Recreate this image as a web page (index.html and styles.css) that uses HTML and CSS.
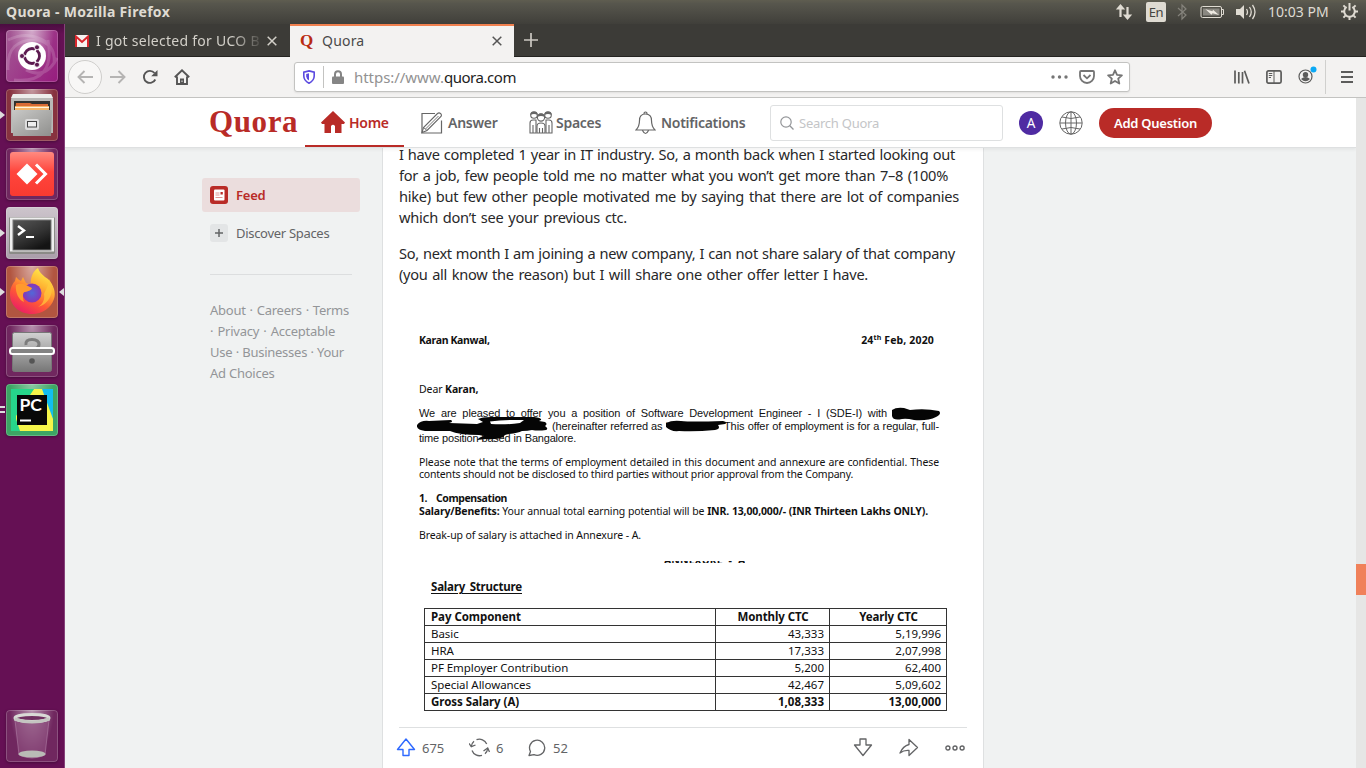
FILE: index.html
```html
<!DOCTYPE html>
<html lang="en">
<head>
<meta charset="utf-8">
<title>Quora</title>
<link rel="stylesheet" href="styles.css">
</head>
<body>
<header class="panel">
  <span class="panel-title">Quora - Mozilla Firefox</span>
  <div class="indicators">
    <svg width="18" height="18" viewBox="0 0 18 18" class="ind-net"><path d="M5.500 14V4M12.500 4v11" stroke="#dfdbd2" stroke-width="2.200" fill="none"/><path d="M.8 6.500L5.500 1l4.700 5.500zM7.800 11.500l4.700 5.500 4.700-5.500z" fill="#dfdbd2"/></svg>
    <span class="lang">En</span>
    <svg width="10" height="18" viewBox="0 0 10 18" class="ind-bt"><path d="M1 5l8 7-4 4V2l4 4-8 7" stroke="#85837c" stroke-width="1.200" fill="none"/></svg>
    <svg width="25" height="14" viewBox="0 0 25 14" class="ind-bat"><rect x="1" y="1.500" width="20.500" height="11" rx="1.500" fill="none" stroke="#dfdbd2"/><rect x="3" y="3.500" width="16.500" height="7" fill="#8a8881"/><path d="M22 4.500h1.500v5H22" fill="none" stroke="#dfdbd2"/><path d="M5.500 4.300l7 2 .5-1.500L19 10l-6.500-1.800-1 1.500z" fill="#eeeae2"/></svg>
    <svg width="20" height="18" viewBox="0 0 20 18" class="ind-vol"><path d="M0 6h4l4-4v14l-4-4H0z" fill="#dfdbd2"/><path d="M10.500 6q2 3 0 6M13.500 4q3.500 5 0 10M16.500 2q5 7 0 14" stroke="#dfdbd2" stroke-width="1.300" fill="none"/></svg>
    <span class="clock">10:03 PM</span>
    <svg width="17" height="17" viewBox="0 0 17 17" class="ind-gear"><path d="M5.700 4a5.300 5.300 0 1 0 5.600 0M8.500 0v7.500" stroke="#dfdbd2" stroke-width="2" fill="none"/><path d="M2.400 2.400l2 2M14.600 2.400l-2 2M0 8.500h3M14 8.500h3M2.400 14.600l2-2M14.600 14.600l-2-2M8.500 14v3" stroke="#dfdbd2" stroke-width="2"/></svg>
  </div>
</header>
<div class="desktop">
<aside class="launcher">
  <div class="tile tile-dash">
    <svg width="52" height="52" viewBox="0 0 52 52"><g fill="none" stroke="#fff" stroke-opacity=".16" stroke-width="3"><path d="M2 40Q0 8 32 10Q50 14 48 34M8 50Q50 54 42 10M2 10Q22 0 40 12M20 40Q40 50 51 28"/></g><circle cx="26" cy="26" r="14" fill="#fff"/><circle cx="26" cy="26" r="7.500" fill="none" stroke="#5c1a50" stroke-width="2.800"/><path d="M26 26H14M26 26l6.500-11M26 26l6.500 11" stroke="#fff" stroke-width="1.500"/><g fill="#5c1a50" stroke="#fff" stroke-width=".8"><circle cx="16" cy="26" r="2.500"/><circle cx="31" cy="17.300" r="2.500"/><circle cx="31" cy="34.700" r="2.500"/></g></svg>
  </div>
  <div class="tile tile-files"><i class="run"></i>
    <svg width="52" height="52" viewBox="0 0 52 52"><defs><linearGradient id="cab" x2="1" y2="1"><stop stop-color="#c9c9c7"/><stop offset="1" stop-color="#8f8f8d"/></linearGradient></defs><path d="M7 5h38l2 5v34H5V10z" fill="#b9b9b7"/><path d="M7 5h38l2 4H5z" fill="#ededeb"/><path d="M8 12h36v10H8z" fill="#30302e"/><path d="M10 14h14l2 1h16v8H9z" fill="#d96b35"/><path d="M9 17h34v5H9z" fill="#f5b66a"/><path d="M9 18.500h34" stroke="#fff3df"/><path d="M6 21h40l-1 26H7z" fill="url(#cab)"/><rect x="19" y="30" width="14" height="11" rx="2" fill="#ddd"/><rect x="21.500" y="32.500" width="9" height="5.500" fill="#eee" stroke="#444"/></svg>
  </div>
  <div class="tile">
    <svg width="52" height="52" viewBox="0 0 52 52"><defs><linearGradient id="red" x2="0" y2="1"><stop stop-color="#ff8a80"/><stop offset=".45" stop-color="#ff453c"/><stop offset="1" stop-color="#f93a31"/></linearGradient></defs><rect x="4" y="4" width="44" height="44" rx="3" fill="url(#red)"/><path d="M21 15.500L31.500 26 21 36.500 10.500 26z" fill="#fff"/><path d="M30 16.500L39.500 26 30 35.500" fill="none" stroke="#fff" stroke-width="3"/></svg>
  </div>
  <div class="tile tile-term"><i class="run"></i>
    <svg width="52" height="52" viewBox="0 0 52 52"><defs><linearGradient id="scr" x2=".6" y2="1"><stop stop-color="#555"/><stop offset=".6" stop-color="#333"/><stop offset="1" stop-color="#141414"/></linearGradient></defs><rect x="3" y="10" width="46" height="37" rx="1.500" fill="#8b8b87"/><rect x="4" y="10.500" width="44" height="34" fill="#eee"/><rect x="6.500" y="12.500" width="39" height="31" fill="#777"/><rect x="7.500" y="13.500" width="37" height="29" fill="url(#scr)"/><path d="M12 19l6 4.500-6 4.500" fill="none" stroke="#fff" stroke-width="2.400"/><path d="M20 30h8" stroke="#fff" stroke-width="2"/></svg>
  </div>
  <div class="tile tile-fox"><i class="run"></i><i class="focus"></i>
    <svg width="52" height="52" viewBox="0 0 52 52"><defs><linearGradient id="fx" x1=".8" x2=".25" y2="1"><stop stop-color="#fff44f"/><stop offset=".35" stop-color="#ffb232"/><stop offset=".65" stop-color="#ff5a35"/><stop offset="1" stop-color="#ea1a68"/></linearGradient><radialGradient id="gl"><stop stop-color="#5268d8"/><stop offset="1" stop-color="#8734b8"/></radialGradient></defs><path d="M32 2c1 4 4 6 7 9l3 2c6 6 8 14 6 20-3 9-12 15-22 15C13 48 4 39 4 28c0-6 3-11 5-13l1-4c2 2 3 3 5 4l2-4 3 6c3 1 4 2 5 2-1-7 2-14 7-17z" fill="url(#fx)"/><circle cx="26" cy="27" r="9.500" fill="url(#gl)"/><path d="M10 19c5-3 10 0 16 3-1 3-4 3-7 4-3 0-2 7-1 10-5-2-9-9-8-17z" fill="#ff9a2e"/><path d="M43 13c7 13 0 25-11 28 5-3 7-8 6-13 2-5 5-9 5-15z" fill="#ffcb3c" opacity=".7"/></svg>
  </div>
  <div class="tile">
    <svg width="52" height="52" viewBox="0 0 52 52"><defs><linearGradient id="gry" x2="0" y2="1"><stop stop-color="#d2d2d2"/><stop offset="1" stop-color="#777"/></linearGradient></defs><rect x="6.500" y="7.500" width="39" height="39" rx="2" fill="url(#gry)" stroke="#777"/><path d="M20 20q-1-5.500 6-5.500t7 5q0 3-4 4.500" fill="none" stroke="#7c7c7c" stroke-width="3"/><circle cx="26" cy="36" r="2.800" fill="#555"/><rect x="4" y="23" width="44" height="6" rx="2.500" fill="#838383" stroke="#fff" stroke-width="2"/></svg>
  </div>
  <div class="tile tile-py"><i class="dots"></i>
    <svg width="52" height="52" viewBox="0 0 52 52"><path d="M5 5h42v42H5z" fill="#26d58a"/><path d="M35 5h12v30z" fill="#12bdf0"/><path d="M28 5h8l11 30v12H14L5 20z" fill="#f5f54a"/><path d="M5 5h23L10 32v15H5z" fill="#26d58a"/><path d="M11 11h30v30H11z" fill="#080808"/><path d="M14 36.500h11" stroke="#fff" stroke-width="2"/><text x="13.500" y="26.500" class="pc" textLength="22.500" lengthAdjust="spacingAndGlyphs">PC</text></svg>
  </div>
  <div class="tile tile-trash">
    <svg width="52" height="52" viewBox="0 0 52 52"><path d="M9 10l4 35q13 6 26 0l4-35" fill="#925584" fill-opacity=".6" stroke="#b98bb0" stroke-opacity=".5"/><ellipse cx="26" cy="44" rx="13.500" ry="3.500" fill="#b9bbb6"/><ellipse cx="26" cy="8" rx="17" ry="3.500" fill="#703060" stroke="#d9dad6" stroke-width="3"/><path d="M8.500 9q17.500 6 35 0" fill="none" stroke="#c4c5c1" stroke-width="3"/></svg>
  </div>
</aside>
<main class="browser">
  <div class="tabs">
    <div class="tab tab-mail">
      <svg width="14" height="12" viewBox="0 0 14 12"><path d="M0 0h14v12H0z" fill="#f5f2f0"/><path d="M1 12V1.500L7 7l6-5.500V12" fill="none" stroke="#d8262c" stroke-width="2"/></svg>
      <span class="tab-text mail-text">I got selected for UCO B</span>
      <svg width="10" height="10" viewBox="0 0 10 10" class="tab-x"><path d="M.7.7l8.600 8.600M9.300.7L.7 9.300" stroke="#d3d0c9" stroke-width="1.500"/></svg>
    </div>
    <div class="tab tab-active">
      <span class="favicon">Q</span>
      <span class="tab-text">Quora</span>
      <svg width="10" height="10" viewBox="0 0 10 10" class="tab-x"><path d="M.7.7l8.600 8.600M9.300.7L.7 9.300" stroke="#555" stroke-width="1.500"/></svg>
    </div>
    <svg width="14" height="14" viewBox="0 0 14 14" class="newtab"><path d="M7 0v14M0 7h14" stroke="#ccc9c2" stroke-width="1.700"/></svg>
  </div>
  <div class="toolbar">
    <span class="back"><svg width="16" height="14" viewBox="0 0 16 14"><path d="M16 7H1.500M7.500 1l-6 6 6 6" fill="none" stroke="#b5b4b3" stroke-width="1.900"/></svg></span>
    <svg width="16" height="14" viewBox="0 0 16 14" class="fwd"><path d="M0 7h14.500M8.500 1l6 6-6 6" fill="none" stroke="#b5b4b3" stroke-width="1.900"/></svg>
    <svg width="16" height="16" viewBox="0 0 16 16" class="reload"><path d="M13.300 10.500A6 6 0 1 1 12.500 4" fill="none" stroke="#555" stroke-width="1.900"/><path d="M15.500 1v6.300H9.200z" fill="#555"/></svg>
    <svg width="16" height="16" viewBox="0 0 16 16" class="home"><path d="M.8 8.300L8 1.300l7.200 7M3 7.500v7.500h10V7.500" fill="none" stroke="#555" stroke-width="1.900"/><path d="M6 15V9.500h4V15z" fill="#555"/><path d="M8 11.500v1.500" stroke="#eee"/></svg>
    <div class="urlbar">
      <svg width="12" height="14" viewBox="0 0 12 14"><path d="M6 .9l5.200 1.300V6q0 4.500-5.200 7.200Q.8 10.500.8 6V2.200z" fill="none" stroke="#5c4be0" stroke-width="1.600"/><path d="M6 3.200L3.200 4v2.500Q3.400 9 6 10.500z" fill="#5c4be0"/></svg>
      <i class="url-sep"></i>
      <svg width="12" height="14" viewBox="0 0 12 14" class="lock"><path d="M3 7V4.200a3 3 0 0 1 6 0V7" fill="none" stroke="#858585" stroke-width="2"/><rect y="6.500" width="12" height="7.500" rx="1" fill="#858585"/></svg>
      <span class="url"><span class="dim">https://www.</span>quora.com</span>
      <svg width="17" height="4" viewBox="0 0 17 4" class="dots3"><g fill="#757575"><circle cx="2" cy="2" r="1.700"/><circle cx="8.500" cy="2" r="1.700"/><circle cx="15" cy="2" r="1.700"/></g></svg>
      <svg width="16" height="14" viewBox="0 0 16 14" class="pocket"><path d="M2 1h12q1 0 1 1v4a7 7 0 0 1-14 0V2q0-1 1-1z" fill="none" stroke="#757575" stroke-width="1.800"/><path d="M4.500 5L8 8.300 11.500 5" fill="none" stroke="#757575" stroke-width="1.800"/></svg>
      <svg width="16" height="16" viewBox="0 0 16 16"><path d="M8 1.300l2 4.500 4.900.5-3.700 3.300 1.100 4.900L8 12l-4.300 2.500 1.100-4.900L1.100 6.300 6 5.800z" fill="none" stroke="#757575" stroke-width="1.800" stroke-linejoin="round"/></svg>
    </div>
    <svg width="16" height="14" viewBox="0 0 16 14" class="lib"><path d="M1 .5v13M4.800 2v11.500M8.500 2v11.500M10.500.8L15 13.500" fill="none" stroke="#5c5c5b" stroke-width="1.700"/></svg>
    <svg width="16" height="14" viewBox="0 0 16 14" class="side"><rect x=".9" y=".9" width="14.200" height="12.200" rx="1.500" fill="none" stroke="#5c5c5b" stroke-width="1.700"/><path d="M8 1v12M2.800 3.500h3.500M2.800 5.500h3.500M2.800 7.500H5" stroke="#5c5c5b" stroke-width="1"/></svg>
    <svg width="19" height="18" viewBox="0 0 19 18" class="acct"><circle cx="7.500" cy="10.500" r="6.500" fill="#f3f2f1" stroke="#5c5c5b" stroke-width="1.200"/><circle cx="7.500" cy="8.700" r="2.700" fill="#5c5c5b"/><path d="M3 13q4.500-4 9 0-4.500 4.500-9 0z" fill="#5c5c5b"/><circle cx="15.500" cy="3.500" r="3" fill="#0ba9f5"/></svg>
    <i class="tool-sep"></i>
    <svg width="12" height="12" viewBox="0 0 12 12"><path d="M0 1h12M0 6h12M0 11h12" stroke="#5c5c5b" stroke-width="1.800"/></svg>
  </div>
  <div class="viewport">
  <div class="page">
    <nav class="site-nav">
      <span class="logo">Quora</span>
      <a class="nav-item nav-home"><svg width="24" height="22" viewBox="0 0 24 22"><path d="M12 0l12 11.500-1 1.500h-2.500v9H14v-7q-2-2.500-4 0v7H3.500v-9H1l-1-1.500z" fill="#b92b27"/></svg><span>Home</span></a>
      <a class="nav-item nav-answer"><svg width="22" height="22" viewBox="0 0 22 22"><path d="M14 1.500H1v19.500h19.500V8.500" fill="none" stroke="#666" stroke-width="1.200"/><path d="M1 20.500l1.500-5L16.500 1.500q1.500-1.200 3 0t.5 3L6 18.500z" fill="#fff" stroke="#666" stroke-width="1.100"/><path d="M4.500 17L17.500 4M2.500 15.500L6 18.500" stroke="#666" stroke-width=".9"/></svg><span>Answer</span></a>
      <a class="nav-item nav-spaces"><svg width="24" height="23" viewBox="0 0 24 23"><g fill="#fff" stroke="#666" stroke-width="1.100"><circle cx="5" cy="4" r="3.300"/><circle cx="19" cy="4" r="3.300"/><path d="M1 22V12q0-3 3-3h3v13zM23 22V12q0-3-3-3h-3v13zM4 22v-8M20 22v-8"/><path d="M8 22v-7q0-3 4-3t4 3v7zM10.500 22v-5M13.500 22v-5"/><circle cx="12" cy="6.500" r="3.600"/></g><path d="M1.500 4Q1 1 5 .7 9 1 8.500 4 5 2 1.500 4zM15.500 4Q15 1 19 .7q4 .3 3.500 3.300Q19 2 15.500 4zM8.200 6q0-3.500 3.800-3.500T15.800 6Q12 4 8.200 6z" fill="#666"/></svg><span>Spaces</span></a>
      <a class="nav-item nav-notif"><svg width="21" height="24" viewBox="0 0 21 24"><path d="M10.500 3C6 3 4.500 6 4.500 9.500c0 5-1 7-3.500 9.500h19c-2.500-2.500-3.500-4.500-3.500-9.500 0-3.500-1.500-6.500-6-6.500zM9 3V2q1.500-2 3 0v1M7.500 19.500q3 6 6 0" fill="none" stroke="#666" stroke-width="1.200"/></svg><span>Notifications</span></a>
      <div class="search"><svg width="14" height="14" viewBox="0 0 14 14"><circle cx="6" cy="6" r="5.200" fill="none" stroke="#939598" stroke-width="1.200"/><path d="M9.800 9.800L13.500 13.500" stroke="#939598" stroke-width="1.300"/></svg><span>Search Quora</span></div>
      <span class="avatar">A</span>
      <svg width="24" height="24" viewBox="0 0 24 24" class="globe"><g fill="none" stroke="#666"><circle cx="12" cy="12" r="11.200"/><ellipse cx="12" cy="12" rx="5.500" ry="11.200"/><path d="M12 1v22M1 12h22M3 6q9 3 18 0M3 18q9-3 18 0"/></g></svg>
      <a class="ask">Add Question</a>
    </nav>
    <div class="columns">
      <aside class="sidebar">
        <a class="feed"><svg width="18" height="18" viewBox="0 0 18 18"><rect width="18" height="18" rx="3" fill="#b92b27"/><rect x="4" y="3.500" width="10.500" height="11" rx="1" fill="#fff"/><path d="M5.500 7h4M5.500 9h4M5.500 11.500h7" stroke="#dc8a88" stroke-width=".9"/><rect x="10.500" y="6" width="2.300" height="2.500" fill="#b92b27"/></svg><span>Feed</span></a>
        <a class="discover"><svg width="18" height="18" viewBox="0 0 18 18"><rect width="18" height="18" rx="3" fill="#e3e5e6"/><path d="M9 5v8M5 9h8" stroke="#636466" stroke-width="1.500"/></svg><span>Discover Spaces</span></a>
        <div class="links">
          <p class="k1">About · Careers · Terms</p><p class="k2">· Privacy · Acceptable</p><p class="k3">Use · Businesses · Your</p><p class="k4">Ad Choices</p>
        </div>
      </aside>
      <article class="post">
        <div class="para">
          <p class="p1">I have completed 1 year in IT industry. So, a month back when I started looking out</p>
          <p class="p2">for a job, few people told me no matter what you won’t get more than 7–8 (100%</p>
          <p class="p3">hike) but few other people motivated me by saying that there are lot of companies</p>
          <p class="p4">which don’t see your previous ctc.</p>
        </div>
        <div class="para">
          <p class="p5">So, next month I am joining a new company, I can not share salary of that company</p>
          <p class="p6">(you all know the reason) but I will share one other offer letter I have.</p>
        </div>
        <figure class="letter">
          <div class="letter-head"><b class="l-name">Karan Kanwal,</b><b class="l-date">24<sup>th</sup> Feb, 2020</b></div>
          <p class="l-dear">Dear <b>Karan,</b></p>
          <div class="offer">
            <p class="o1">We are pleased to offer you a position of Software Development Engineer - I (SDE-I) with</p>
            <div class="o2"><p class="o2a">(hereinafter referred as ‘</p><p class="o2b">This offer of employment is for a regular, full-</p></div>
            <p class="o3">time position based in Bangalore.</p>
            <svg class="ink" width="524" height="36" viewBox="0 0 524 36"><path d="M475 3q4-3 12-2l6 2q15-2 29 1 3 3-3 6-8 4-22 3-8-2-12-1-9 2-10-3zM0 18q4-5 12-4l22-1q3 2-2 3l28 1 6-2-5-3q4-2 13-2l43 0q8 1 7 3l-2 1 6 1q3 2 0 4 4 3 1 4-8 1-14 0-4 1-10 1-4 2-13 3-6 1-5 3-8 3-18 2l-9 1q2-3 7-4l-5-1q-20 0-29-4L8 24Q-1 23 0 18zM249 16q6-3 15-2 10 1 42 0 5 1 2 3l-7 1q3 4-3 5-20 2-36 1-8 1-13-4z" fill="#050505"/><path d="M73 14.500q15-2 34-1.500l-4 3q-15 2-29 1z" fill="#fff"/></svg>
          </div>
          <p class="l-note1">Please note that the terms of employment detailed in this document and annexure are confidential. These</p>
          <p class="l-note2">contents should not be disclosed to third parties without prior approval from the Company.</p>
          <p class="l-comp"><b>1.&nbsp;&nbsp; Compensation</b></p>
          <p class="l-sal"><b>Salary/Benefits:</b> Your annual total earning potential will be <b>INR. 13,00,000/- (INR Thirteen Lakhs ONLY).</b></p>
          <p class="l-break">Break-up of salary is attached in Annexure - A.</p>
          <div class="annex"><b>ANNEXURE - A</b></div>
          <p class="l-struct"><b>Salary Structure</b></p>
          <table class="pay">
            <tr><th class="c1">Pay Component</th><th class="c2">Monthly CTC</th><th class="c3">Yearly CTC</th></tr>
            <tr><td>Basic</td><td>43,333</td><td>5,19,996</td></tr>
            <tr><td>HRA</td><td>17,333</td><td>2,07,998</td></tr>
            <tr><td>PF Employer Contribution</td><td>5,200</td><td>62,400</td></tr>
            <tr><td>Special Allowances</td><td>42,467</td><td>5,09,602</td></tr>
            <tr class="gross"><td>Gross Salary (A)</td><td>1,08,333</td><td>13,00,000</td></tr>
          </table>
        </figure>
        <footer class="actions">
          <svg width="20" height="19" viewBox="0 0 20 19" class="up"><path d="M10 1l8.500 10.500H13V17.500H7V11.500H1.500z" fill="none" stroke="#2e69ff" stroke-width="1.400" stroke-linejoin="round"/></svg><span class="n1">675</span>
          <svg width="21" height="19" viewBox="0 0 21 19"><path d="M2.300 8.500A8 8 0 0 1 5 3.300M7.500 1.700A8 8 0 0 1 17.700 6M18.700 10.500A8 8 0 0 1 16 15.700M13 17.300A8 8 0 0 1 3 12.500" fill="none" stroke="#636466" stroke-width="1.300"/><path d="M0 5.500l2.300 3.200 4.200-1.700M14.500 13l4.200-3 1.800 4" fill="none" stroke="#636466" stroke-width="1.300"/></svg><span class="n2">6</span>
          <svg width="18" height="18" viewBox="0 0 18 18"><path d="M1 16.500l1.500-4A7.600 7.600 0 1 1 6 15.700z" fill="none" stroke="#636466" stroke-width="1.300" stroke-linejoin="round"/></svg><span class="n3">52</span>
          <svg width="20" height="19" viewBox="0 0 20 19" class="down"><path d="M10 17.500l8.500-10.500H13V1H7v6H1.500z" fill="none" stroke="#636466" stroke-width="1.300" stroke-linejoin="round"/></svg>
          <svg width="20" height="19" viewBox="0 0 20 19" class="share"><path d="M10 1.500l8.500 8-8.500 8V12.500q-5-.5-9 2.500 3-7 9-8.500z" fill="none" stroke="#636466" stroke-width="1.300" stroke-linejoin="round"/></svg>
          <svg width="20" height="6" viewBox="0 0 20 6" class="more"><g fill="none" stroke="#636466" stroke-width="1.400"><circle cx="2.900" cy="3" r="2"/><circle cx="10" cy="3" r="2"/><circle cx="17.100" cy="3" r="2"/></g></svg>
        </footer>
      </article>
    </div>
  </div>
  <div class="scrollbar"><i class="thumb"></i></div>
  </div>
</main>
</div>
</body>
</html>
```
FILE: styles.css
```css
* { box-sizing: border-box; }
body { margin: 0; width: 1366px; height: 768px; overflow: hidden; font-family: "Noto Sans", "Open Sans", sans-serif; display: flex; flex-direction: column; background: #f0f2f2; }
p { margin: 0; white-space: nowrap; }
svg { display: block; flex: none; }
i { display: block; flex: none; }
.panel { height: 24px; flex: none; display: flex; justify-content: space-between; align-items: center; padding: 0 8px 1px 6px; background: linear-gradient(#5f5d50, #57564d 15%, #403f3a); color: #dfdbd2; }
.panel-title { font-weight: 700; font-size: 14px; letter-spacing: .33px; }
.indicators { display: flex; align-items: center; }
.lang { margin-left: 13px; width: 20px; height: 20px; line-height: 20px; border-radius: 2px; background: #dfdbd2; color: #45443f; font-size: 13px; text-align: center; letter-spacing: -.5px; }
.ind-bt { margin-left: 11px; } .ind-bat { margin-left: 13px; } .ind-vol { margin-left: 11px; }
.clock { margin-left: 12px; width: 61px; font-size: 14px; letter-spacing: 0; white-space: nowrap; }
.ind-gear { margin-left: 12px; }
.desktop { flex: 1; display: flex; min-height: 0; }
.launcher { width: 65px; flex: none; display: flex; flex-direction: column; gap: 7px; padding: 6px 0 6px 6px; background: linear-gradient(#4a0d40, #651054 10px); border-right: 1px solid #86427a; }
.tile { position: relative; width: 52px; height: 52px; flex: none; border-radius: 4px; background: radial-gradient(ellipse at 50% 0, rgba(255,255,255,.5), transparent 60%), #70275f; box-shadow: inset 0 0 0 1px rgba(255,255,255,.2), 0 1px 3px rgba(0,0,0,.3); }
.tile-dash { background: radial-gradient(ellipse at 50% 0, rgba(255,255,255,.55), transparent 60%), linear-gradient(120deg, #a45a95, #971b7e); }
.tile-files { background: radial-gradient(ellipse at 50% 0, rgba(255,255,255,.5), transparent 60%), #87323f; }
.tile-term { background: linear-gradient(#cdc5cc, #aa9eaa); }
.tile-fox { background: radial-gradient(ellipse at 50% 0, rgba(255,255,255,.5), transparent 60%), #b25540; }
.tile-py { background: radial-gradient(ellipse at 50% 0, rgba(255,255,255,.4), transparent 60%), #3da564; }
.tile-trash { margin-top: auto; }
.run, .focus { position: absolute; top: 22px; border: 4px solid transparent; }
.run { left: -6px; border-left: 5px solid #ddd; }
.focus { right: -6px; border-right: 5px solid #ddd; border-left: 0; }
.dots { position: absolute; left: -6px; top: 22px; width: 5px; height: 7px; border: solid #ddd; border-width: 2.500px 0; }
.pc { font: 700 17px Lato, sans-serif; fill: #fff; }
.browser { flex: 1; min-width: 0; display: flex; flex-direction: column; }
.tabs { height: 33px; flex: none; display: flex; align-items: flex-end; background: #3c3b37; border-bottom: 1px solid #242320; }
.tab { height: 33px; margin-bottom: -1px; display: flex; align-items: center; }
.tab-mail { width: 225px; padding: 0 13px 0 10px; color: #d3d0c9; }
.tab-text { font-size: 14px; white-space: nowrap; }
.mail-text { width: 165px; margin-left: 7px; overflow: hidden; letter-spacing: .27px; -webkit-mask-image: linear-gradient(90deg, #000 136px, transparent 168px); mask-image: linear-gradient(90deg, #000 136px, transparent 168px); }
.tab-x { margin-left: auto; }
.tab-active { width: 224px; padding: 0 12px 2px 10px; background: #f3f2f1; border-top: 2px solid #f0804f; color: #4a4a4a; letter-spacing: .2px; }
.favicon { width: 15px; margin-right: 7px; font: 700 17px "Liberation Serif", serif; color: #b92b12; }
.newtab { margin: 0 0 9px 10px; }
.toolbar { height: 41px; flex: none; display: flex; align-items: center; padding: 0 0 1px 3px; background: #f3f2f1; border-bottom: 1px solid #c3c3c1; }
.back { width: 34px; height: 34px; flex: none; border: 1px solid #cfcecc; border-radius: 50%; display: flex; align-items: center; justify-content: center; background: #f8f7f6; }
.fwd { margin-left: 8px; } .reload { margin-left: 16px; } .home { margin-left: 16px; }
.urlbar { margin-left: 104px; width: 836px; flex: none; height: 30px; padding: 0 6px 0 8px; display: flex; align-items: center; background: #fff; border: 1px solid #c3c3c1; border-radius: 3px; box-shadow: 0 1px 2px rgba(0,0,0,.08); }
.url-sep { width: 1px; height: 22px; margin: 0 8px; background: #c3c3c1; }
.url { margin-left: 10px; font-size: 15px; letter-spacing: -.45px; color: #222; white-space: nowrap; }
.dim { color: #929292; letter-spacing: -.05px; }
.dots3 { margin-left: auto; } .pocket { margin: 0 12px 0 11px; }
.lib { margin-left: 104px; } .side { margin-left: 16px; } .acct { margin-left: 16px; margin-bottom: 4px; }
.tool-sep { width: 1px; height: 34px; margin: 0 15px 0 8px; background: #d0d0ce; }
.viewport { flex: 1; min-height: 0; display: flex; }
.page { flex: 1; min-width: 0; overflow: hidden; }
.scrollbar { width: 10px; flex: none; padding-top: 466px; background: #e6e6e5; }
.thumb { height: 31px; background: #f0815a; }
.site-nav { position: relative; z-index: 1; height: 50px; padding-left: 144px; display: flex; align-items: center; background: #fff; border-bottom: 1px solid #dee0e1; box-shadow: 0 2px 3px rgba(0,0,0,.05); }
.logo { width: 96px; font: 700 31px/44px "Liberation Serif", serif; color: #b92b27; letter-spacing: .6px; padding-bottom: 2px; }
.nav-item { height: 49px; display: flex; align-items: center; gap: 4px; color: #636466; font-weight: 600; font-size: 14px; white-space: nowrap; letter-spacing: -.27px; }
.nav-home { width: 99px; padding: 1px 0 0 16px; border-bottom: 2px solid #b92b27; color: #b92b27; }
.nav-answer { width: 109px; padding-left: 17px; gap: 5px; }
.nav-spaces { width: 105px; padding-left: 16px; gap: 3px; }
.nav-notif { width: 147px; padding-left: 17px; gap: 5px; }
.search { width: 233px; height: 36px; margin-left: 5px; padding-left: 9px; display: flex; align-items: center; gap: 5px; border: 1px solid #dee0e1; border-radius: 3px; color: #c4c5c7; font-size: 13px; letter-spacing: -.25px; }
.avatar { width: 24px; height: 24px; margin-left: 16px; border-radius: 50%; background: #4f2ba2; color: #fff; font-size: 13.500px; line-height: 24px; text-align: center; }
.globe { margin-left: 16px; }
.ask { width: 113px; height: 30px; margin-left: 16px; border-radius: 15px; background: #b92b27; color: #fff; font-size: 13px; font-weight: 600; line-height: 30px; text-align: center; letter-spacing: -.25px; }
.columns { display: flex; padding-left: 137px; }
.sidebar { width: 158px; padding-top: 30px; font-size: 13px; color: #636466; }
.feed, .discover { display: flex; align-items: center; gap: 8px; height: 34px; padding-left: 8px; border-radius: 3px; }
.feed { background: #ebdddd; color: #b92b27; font-weight: 600; letter-spacing: -.2px; }
.discover { margin-top: 4px; letter-spacing: -.3px; }
.links { margin: 24px 8px 0; padding-top: 25px; border-top: 1px solid #dcdedf; color: #939598; line-height: 21px; }
.links p, .para p, .letter p { text-align-last: justify; }
.links p { letter-spacing: -.25px; }
.k1 { width: 139px; } .k2 { width: 125px; } .k3 { width: 134px; } .k4 { width: 64px; }
.post { width: 602px; margin: -5px 0 0 22px; padding: 1px 16px 0; height: 630px; background: #fff; border: solid #dee0e1; border-width: 0 1px; }
.para { margin-bottom: 15px; font-size: 14.600px; line-height: 21px; color: #282829; letter-spacing: -.27px; }
.p1 { width: 556px; } .p2 { width: 549px; } .p3 { width: 560px; } .p4 { width: 228px; } .p5 { width: 556px; } .p6 { width: 469px; }
.letter { margin: 0; padding: 34px 20px 0; height: 427px; font-size: 10.500px; line-height: 12.200px; color: #111; letter-spacing: -.1px; }
.letter-head { display: flex; justify-content: space-between; width: 515px; white-space: nowrap; }
.l-name { letter-spacing: -.35px; }
.l-date { letter-spacing: .15px; }
sup { font-size: 7px; line-height: 0; }
.l-dear { width: 59px; margin-top: 37px; }
.offer { position: relative; margin-top: 12px; font: 11px/12.200px "Liberation Sans", Arial, sans-serif; letter-spacing: -.1px; }
.o1 { width: 468px; } .o2 { display: flex; padding-left: 133px; } .o2a { width: 116px; } .o2b { width: 215px; margin-left: 56px; } .o3 { width: 157px; letter-spacing: -.2px; }
.ink { position: absolute; left: -2px; top: 0; }
.l-note1 { margin-top: 12px; width: 520px; } .l-note2 { width: 434px; letter-spacing: -.2px; }
.l-comp { margin-top: 12px; width: 88px; letter-spacing: -.4px; } .l-sal { width: 509px; letter-spacing: -.15px; } .l-break { margin-top: 12px; width: 222px; }
.annex { display: flex; align-items: flex-end; height: 2px; width: 81px; margin: 20px 0 0 245px; overflow: hidden; white-space: nowrap; letter-spacing: .1px; word-spacing: 3px; }
.annex b { margin-bottom: -3px; }
.l-struct { margin: 17px 0 0 12px; width: 91px; font-size: 11.500px; line-height: 14px; letter-spacing: -.2px; text-decoration: underline; text-underline-offset: 2px; }
.pay { margin: 14px 0 0 5px; width: 523px; border-collapse: collapse; table-layout: fixed; font-size: 11.500px; line-height: 16px; letter-spacing: 0; }
.pay td, .pay th { height: 17px; padding: 0 5px 0 6px; border: 1px solid #333; text-align: right; }
.pay td:first-child, .pay th:first-child { text-align: left; letter-spacing: -.05px; }
.c1 { width: 291px; } .c2 { width: 114px; }
.pay th.c2, .pay th.c3 { text-align: center; letter-spacing: -.1px; }
.gross { font-weight: 700; }
.actions { display: flex; align-items: center; height: 41px; padding-bottom: 1px; border-top: 1px solid #dee0e1; font-size: 13px; color: #636466; width: 568px; }
.up { margin-left: -3px; } .n1 { width: 53px; padding-left: 6px; } .n2 { width: 38px; padding-left: 6px; } .n3 { padding-left: 7px; }
.down { margin-left: auto; } .share { margin: 0 26px; } .more { margin-right: 2px; }
```
